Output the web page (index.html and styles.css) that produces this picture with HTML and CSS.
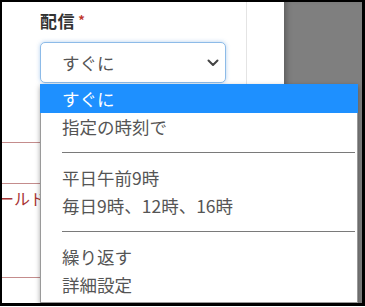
FILE: index.html
```html
<!DOCTYPE html>
<html lang="ja">
<head>
<meta charset="utf-8">
<link rel="stylesheet" href="styles.css">
</head>
<body>
<div class="frame">
  <div class="panel">
    <div class="col">
      <div class="field">
        <div class="label">配信 <span class="req">*</span></div>
        <div class="select">
          <span class="select-value">すぐに</span>
          <svg class="chev" width="12" height="8" viewBox="0 0 12 8"><path d="M1.5 1.5 L6 6 L10.5 1.5" fill="none" stroke="#444" stroke-width="2" stroke-linecap="round" stroke-linejoin="round"/></svg>
        </div>
      </div>
      <div class="rows">
        <div class="row row-a"></div>
        <div class="row row-b"><span class="err">ールド</span></div>
        <div class="row row-c"></div>
      </div>
    </div>
  </div>
  <div class="backdrop"></div>
  <ul class="menu">
    <li class="opt active">すぐに</li>
    <li class="opt">指定の時刻で</li>
    <li class="sep"></li>
    <li class="opt">平日午前9時</li>
    <li class="opt">毎日9時、12時、16時</li>
    <li class="sep"></li>
    <li class="opt">繰り返す</li>
    <li class="opt">詳細設定</li>
  </ul>
</div>
</body>
</html>
```

FILE: styles.css
```css
* { box-sizing: border-box; }
html, body { margin: 0; padding: 0; background: #fff; }
body {
  font-family: "Noto Sans CJK JP", "Noto Sans", sans-serif;
  width: 365px;
  height: 307px;
  overflow: hidden;
}
.frame {
  position: relative;
  width: 365px;
  height: 306px;
  border: 2px solid #000;
  border-right-width: 3px;
  border-bottom-width: 3px;
  display: flex;
  overflow: hidden;
}
.panel {
  width: 282px;
  background: #fff;
  display: flex;
  flex: none;
}
.col {
  width: 245px;
  border-right: 1px solid #e4e4e4;
  height: 100%;
}
.field {
  padding: 6px 0 0 38px;
}
.label {
  font-size: 17px;
  line-height: 24px;
  font-weight: 700;
  color: #333;
  letter-spacing: 0.5px;
}
.req {
  color: #c0392b;
  font-size: 13px;
  font-weight: 700;
  vertical-align: 3px;
  margin-left: -1px;
}
.select {
  margin-top: 9px;
  width: 186px;
  height: 41px;
  border: 1px solid #8dbbe8;
  border-radius: 5px;
  box-shadow: 0 0 4px rgba(90, 150, 220, 0.45);
  display: flex;
  align-items: center;
  justify-content: space-between;
  padding: 0 6px 0 21px;
  background: #fff;
}
.select-value {
  font-size: 17.5px;
  color: #555;
  line-height: 24px;
}
.chev { display: block; margin-top: 1px; }
.rows {
  margin-top: 59px;
}
.row {
  border-top: 1px solid #c48c8c;
}
.row-a { height: 41px; }
.row-b { height: 94px; padding-top: 2px; }
.row-c { height: 20px; }
.err {
  display: block;
  margin-left: -4px;
  color: #a83434;
  font-size: 16px;
  line-height: 24px;
  white-space: nowrap;
}
.backdrop {
  flex: 1;
  background: #7f7f7f;
  box-shadow: inset 6px 0 6px -4px rgba(0, 0, 0, 0.3);
}
.menu {
  position: absolute;
  left: 38px;
  top: 82px;
  width: 318px;
  height: 219px;
  margin: 0;
  padding: 0 0 3px;
  list-style: none;
  background: #fff;
  border: 1px solid #9a9a9a;
  box-shadow: 0 2px 5px rgba(0, 0, 0, 0.35);
}
.opt {
  height: 28px;
  line-height: 28px;
  padding-left: 21px;
  font-size: 17.5px;
  color: #555;
  white-space: nowrap;
}
.opt.active {
  background: #1e90ff;
  color: #fff;
  margin: -1px -1px 0;
  padding-left: 22px;
  height: 29px;
  line-height: 30px;
}
.sep {
  height: 23px;
  display: flex;
  align-items: center;
  padding: 0 2px 0 21px;
}
.sep::before {
  content: "";
  display: block;
  width: 100%;
  height: 1px;
  background: #7a7a7a;
}
```
